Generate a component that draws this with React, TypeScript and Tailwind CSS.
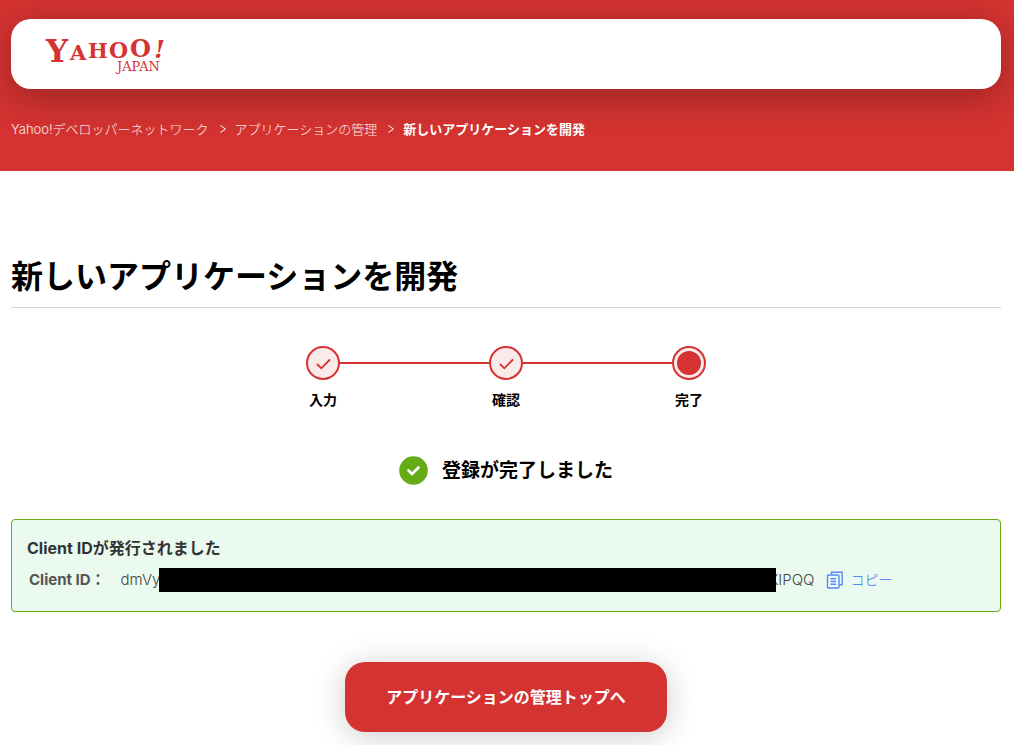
interface Crumb {
  label: string
  href?: string
}

const crumbs: Crumb[] = [
  { label: "Yahoo!デベロッパーネットワーク", href: "#top" },
  { label: "アプリケーションの管理", href: "#apps" },
  { label: "新しいアプリケーションを開発" },
]

const steps = [
  { label: "入力", done: true },
  { label: "確認", done: true },
  { label: "完了", done: false },
]

function Logo() {
  return (
    <svg className="h-[60px] w-[132px]" viewBox="0 0 132 60" fill="#d53331" aria-label="Yahoo! JAPAN" role="img">
      <g fontFamily="'DejaVu Serif', serif" fontWeight="700">
        <text x="5" y="38" fontSize="31">Y</text>
        <text x="29" y="36" fontSize="21">A</text>
        <text x="47" y="34" fontSize="21">H</text>
        <text x="68" y="34" fontSize="22">O</text>
        <text x="89" y="33" fontSize="24">O</text>
        <text x="113" y="34" fontSize="25" fontStyle="italic">!</text>
        <text x="76" y="47" fontSize="13" fontWeight="400">JAPAN</text>
      </g>
    </svg>
  )
}

function Breadcrumbs() {
  return (
    <nav aria-label="breadcrumb" className="mt-[30px]">
      <ol className="flex items-center text-[13px] leading-5 text-white">
        {crumbs.map((crumb, index) => (
          <li key={crumb.label} className="flex items-center">
            {index > 0 && (
              <svg className="mr-2 ml-2.5 h-2.5 w-2" viewBox="0 0 8 10" fill="none" stroke="currentColor">
                <path d="M1.5 1.5L6.5 5L1.5 8.5" />
              </svg>
            )}
            {crumb.href ? (
              <a href={crumb.href} className="font-light text-white/90">{crumb.label}</a>
            ) : (
              <span className="font-bold" aria-current="page">{crumb.label}</span>
            )}
          </li>
        ))}
      </ol>
    </nav>
  )
}

function Stepper() {
  return (
    <ol className="mt-[38px] flex justify-center">
      {steps.map((step, index) => (
        <li key={step.label} className="flex">
          {index > 0 && <div className="mt-4 h-0.5 w-[149px] bg-[#d53331]" />}
          <div className="flex w-[34px] flex-col items-center">
            <div className="flex h-[34px] w-[34px] items-center justify-center rounded-full border-2 border-[#d53331] bg-[#fbeaea]">
              {step.done ? (
                <svg className="h-5 w-5" viewBox="0 0 20 20" fill="none" stroke="#d53331" strokeWidth="1.8" strokeLinecap="round">
                  <path d="M4.5 11.5L8.3 15.3L16.5 7" />
                </svg>
              ) : (
                <div className="h-6 w-6 rounded-full bg-[#d53331]" />
              )}
            </div>
            <span className="mt-2 text-sm leading-6 font-bold whitespace-nowrap">{step.label}</span>
          </div>
        </li>
      ))}
    </ol>
  )
}

function CopyIcon() {
  return (
    <svg className="h-[18px] w-[18px]" viewBox="0 0 18 18" fill="none" stroke="#5b87f5" strokeWidth="1.4">
      <path d="M5.5 3.5V1.2H16.2V13.8H13.5" />
      <rect x="1.5" y="4" width="11.5" height="13" rx="1" />
      <path d="M4.5 7.8h5.5M4.5 10.5h5.5M4.5 13.2h5.5" />
    </svg>
  )
}

export default function App() {
  return (
    <div className="bg-white font-['Inter','Noto_Sans_CJK_JP',sans-serif] text-black">
      <header className="h-[171px] overflow-hidden bg-[#d53331] pt-[19px] pr-[13px] pl-[11px]">
        <div className="flex h-[70px] items-center rounded-[20px] bg-white pl-[30px] shadow-[0_8px_40px_rgba(0,0,0,0.3)]">
          <a href="#yahoo">
            <Logo />
          </a>
        </div>
        <Breadcrumbs />
      </header>

      <main className="pt-20 pr-[13px] pb-[13px] pl-[11px]">
        <h1 className="border-b border-[#d4d4d4] pb-1 text-[32px] leading-[52px] font-bold">
          新しいアプリケーションを開発
        </h1>

        <Stepper />

        <div className="mt-[43px] flex items-center justify-center gap-3.5">
          <svg className="h-[29px] w-[29px]" viewBox="0 0 29 29" fill="none">
            <circle cx="14.5" cy="14.5" r="14.3" fill="#65ab16" />
            <path d="M9.5 14.5L13 18L19.5 11.5" stroke="#fff" strokeWidth="2.6" strokeLinecap="round" strokeLinejoin="round" />
          </svg>
          <p className="text-[19px] leading-[31px] font-bold">登録が完了しました</p>
        </div>

        {/* Issued Client ID */}
        <section className="mt-[33px] rounded-[4px] border border-[#65ab16] bg-[#eafaee] px-[15px] pt-4 pb-[19px]">
          <h2 className="text-base leading-6 font-bold text-[#333]">Client IDが発行されました</h2>
          <div className="mt-2 flex h-6 items-center pl-0.5 text-[15px] leading-6 text-[#444]">
            <span className="font-bold text-[#555]">Client ID：</span>
            <span className="ml-[15px] font-light">dmVy</span>
            <span className="relative -ml-px h-6 w-[617px] bg-black" />
            <span className="-ml-2 font-light">XIPQQ</span>
            <button type="button" className="ml-3 flex items-center gap-1.5 text-sm font-light text-[#3b6ff5]">
              <CopyIcon />
              コピー
            </button>
          </div>
        </section>

        <div className="mt-[50px] flex justify-center">
          <a
            href="#apps"
            className="flex h-[70px] w-[322px] items-center justify-center rounded-[20px] bg-[#d53331] text-base font-bold text-white shadow-[0_4px_32px_rgba(0,0,0,0.2)]"
          >
            アプリケーションの管理トップへ
          </a>
        </div>
      </main>
    </div>
  )
}
